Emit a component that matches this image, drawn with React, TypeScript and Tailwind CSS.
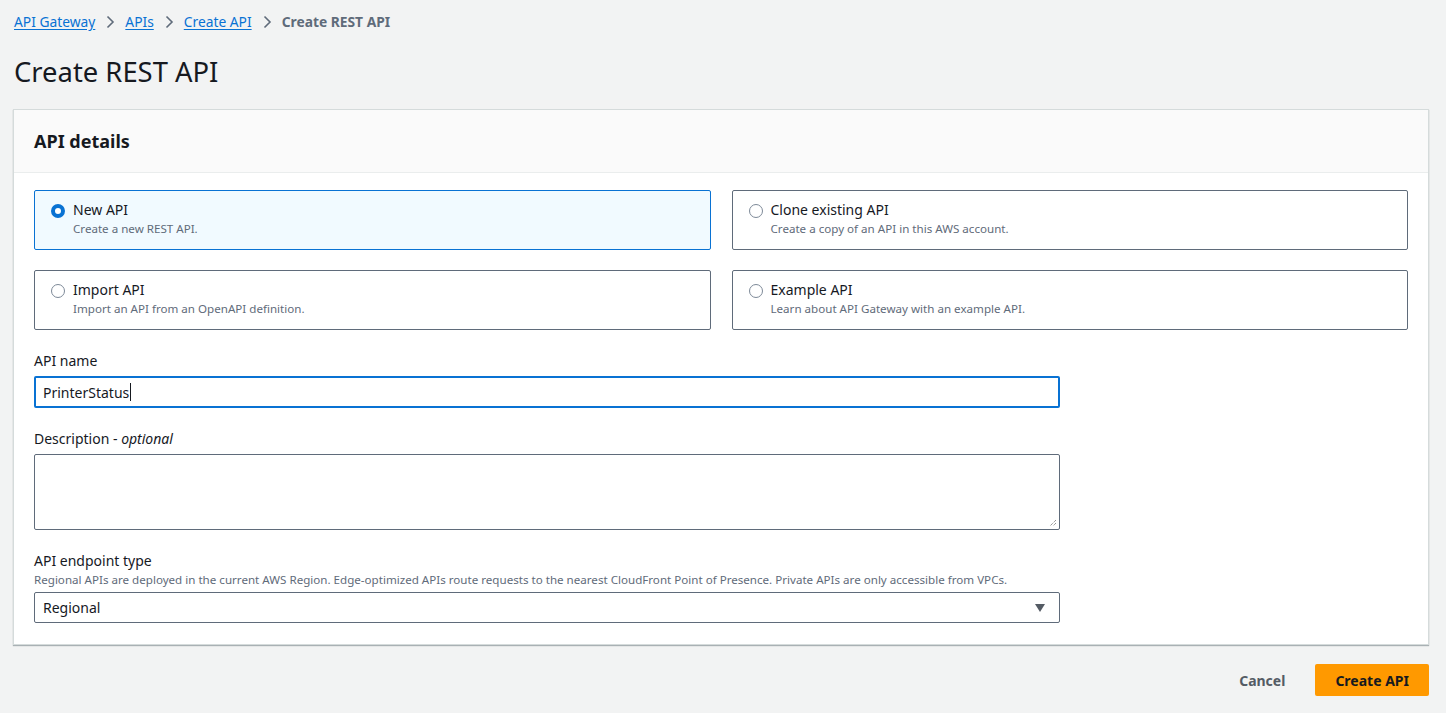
import React from "react";

function Chevron() {
  return (
    <svg width="16" height="16" viewBox="0 0 16 16" className="mx-[7px]" fill="none">
      <path d="M5.5 2.5 11 8l-5.5 5.5" stroke="#5f6b7a" strokeWidth="1.6" />
    </svg>
  );
}

function Radio({ checked }: { checked?: boolean }) {
  return checked ? (
    <span className="mt-[3px] box-border h-[14px] w-[14px] shrink-0 rounded-full border-[4px] border-[#0972d3] bg-white" />
  ) : (
    <span className="mt-[3px] box-border h-[14px] w-[14px] shrink-0 rounded-full border border-[#7d8998] bg-white" />
  );
}

function Tile({ title, desc, checked }: { title: string; desc: string; checked?: boolean }) {
  return (
    <div
      className={
        checked
          ? "flex h-[60px] gap-[8px] rounded-[2px] border border-[#0972d3] bg-[#f1faff] px-[16px] pt-[10px]"
          : "flex h-[60px] gap-[8px] rounded-[2px] border border-[#5f6b7a] bg-white px-[16px] pt-[10px]"
      }
    >
      <Radio checked={checked} />
      <div className="flex flex-col">
        <span className="text-[14px] leading-[18px] text-[#16191f]">{title}</span>
        <span className="mt-[2px] text-[11.6px] leading-[15px] text-[#5f6b7a]">{desc}</span>
      </div>
    </div>
  );
}

export default function App() {
  return (
    <div
      className="min-h-[713px] bg-[#f2f3f3] px-[14px] pt-[12px] text-[#16191f]"
      style={{ fontFamily: '"Noto Sans", "Open Sans", sans-serif' }}
    >
      <nav className="flex h-[20px] items-center text-[13.8px] leading-[20px]">
        <a className="text-[#0972d3] underline underline-offset-2">API Gateway</a>
        <Chevron />
        <a className="text-[#0972d3] underline underline-offset-2">APIs</a>
        <Chevron />
        <a className="text-[#0972d3] underline underline-offset-2">Create API</a>
        <Chevron />
        <span className="font-bold text-[#5f6b7a]">Create REST API</span>
      </nav>
      <h1 className="mt-[24px] text-[27.4px] leading-[32px] text-[#16191f]">Create REST API</h1>

      <div className="mt-[21px] mr-[3px] ml-[-1px] border border-[#d5dbdb] bg-white shadow-[0_1px_1px_rgba(0,28,36,0.3)]">
        <div className="flex h-[63px] items-center border-b border-[#eaeded] bg-[#fafafa] px-[20px]">
          <h2 className="text-[18px] font-bold leading-[22px]">API details</h2>
        </div>
        <div className="px-[20px] pt-[17px] pb-[21px]">
          <div className="grid grid-cols-2 gap-x-[21px] gap-y-[20px]">
            <Tile title="New API" desc="Create a new REST API." checked />
            <Tile title="Clone existing API" desc="Create a copy of an API in this AWS account." />
            <Tile title="Import API" desc="Import an API from an OpenAPI definition." />
            <Tile title="Example API" desc="Learn about API Gateway with an example API." />
          </div>

          <div className="mt-[21px] w-[1026px]">
            <label className="block text-[14px] leading-[20px]">API name</label>
            <div className="mt-[5px] flex h-[32px] items-center rounded-[2px] border-2 border-[#0972d3] px-[7px] text-[14px]">
              <span>PrinterStatus</span>
              <span className="ml-[1px] h-[18px] w-px bg-[#16191f]" />
            </div>

            <label className="mt-[21px] block text-[14px] leading-[20px]">
              Description - <span className="italic">optional</span>
            </label>
            <div className="relative mt-[5px] h-[76px] rounded-[2px] border border-[#5f6b7a] bg-white">
              <svg className="absolute right-[2px] bottom-[2px]" width="8" height="8" viewBox="0 0 8 8">
                <path d="M7 1 1 7M7 4 4 7" stroke="#6b6b6b" strokeWidth="1" strokeDasharray="1 1" />
              </svg>
            </div>

            <label className="mt-[21px] block text-[14px] leading-[20px]">API endpoint type</label>
            <p className="mt-[1px] text-[11.6px] leading-[16px] whitespace-nowrap text-[#5f6b7a]">
              Regional APIs are deployed in the current AWS Region. Edge-optimized APIs route requests to the nearest CloudFront Point of Presence. Private APIs are only accessible from VPCs.
            </p>
            <div className="mt-[4px] flex h-[31px] items-center justify-between rounded-[2px] border border-[#5f6b7a] bg-white px-[8px] text-[14px]">
              <span>Regional</span>
              <svg width="12" height="10" viewBox="0 0 12 10" className="mr-[5px]">
                <path d="M1 1h10L6 9z" fill="#545b64" />
              </svg>
            </div>
          </div>
        </div>
      </div>

      <div className="mt-[19px] mr-[3px] flex items-center justify-end gap-[10px]">
        <button className="px-[20px] py-[5px] text-[14px] font-bold text-[#545b64]">Cancel</button>
        <button className="h-[32px] rounded-[2px] bg-[#ff9900] px-[20px] text-[14px] font-bold text-[#16191f]">
          Create API
        </button>
      </div>
    </div>
  );
}
